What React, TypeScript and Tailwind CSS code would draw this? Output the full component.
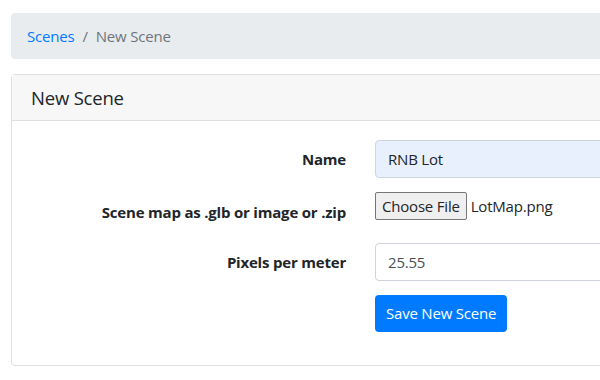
export default function App() {
  return (
    <div className="h-[380px] w-[600px] overflow-hidden bg-white pl-[11px] pt-[13px] font-['Open_Sans','Noto_Sans',sans-serif] text-[15px] tracking-[-0.2px] text-[#212529]">
      <nav aria-label="breadcrumb" className="flex h-[46px] w-[620px] items-center rounded-[4px] bg-[#e9ecef] px-[16px]">
        <a href="#" className="text-[#007bff]">Scenes</a>
        <span className="px-[8px] text-[#6c757d]">/</span>
        <span className="text-[#6c757d]">New Scene</span>
      </nav>

      <section className="mt-[15px] h-[292px] w-[620px] rounded-[4px] border border-[#dfdfdf]">
        <div className="flex h-[46px] items-center border-b border-[#dfdfdf] bg-[#f7f7f7] px-[19px]">
          <h5 className="text-[18.5px] font-medium">New Scene</h5>
        </div>

        <form className="pt-[19px]">
          <div className="flex h-[38px] items-center">
            <label className="w-[334px] text-right font-bold">Name</label>
            <input
              defaultValue="RNB Lot"
              className="ml-[29px] h-[38px] flex-1 rounded-[4px] border border-[#ced4da] bg-[#e8f0fe] px-[12px] outline-none"
            />
          </div>

          <div className="mt-[14px] flex h-[38px] items-center">
            <label className="w-[334px] pt-[2px] text-right font-bold">Scene map as .glb or image or .zip</label>
            <div className="ml-[29px] flex items-center self-start">
              <span className="flex h-[28px] items-center rounded-[2px] border border-[#767676] bg-[#efefef] px-[6px]">Choose File</span>
              <span className="ml-[4px]">LotMap.png</span>
            </div>
          </div>

          <div className="mt-[13px] flex h-[38px] items-center">
            <label className="w-[334px] text-right font-bold">Pixels per meter</label>
            <input
              defaultValue="25.55"
              className="ml-[29px] h-[38px] flex-1 rounded-[4px] border border-[#ced4da] bg-white px-[12px] text-[#495057] outline-none"
            />
          </div>

          <div className="mt-[14px] flex">
            <button type="button" className="ml-[363px] h-[37px] rounded-[4px] bg-[#007bff] px-[11px] text-white">
              Save New Scene
            </button>
          </div>
        </form>
      </section>
    </div>
  );
}
